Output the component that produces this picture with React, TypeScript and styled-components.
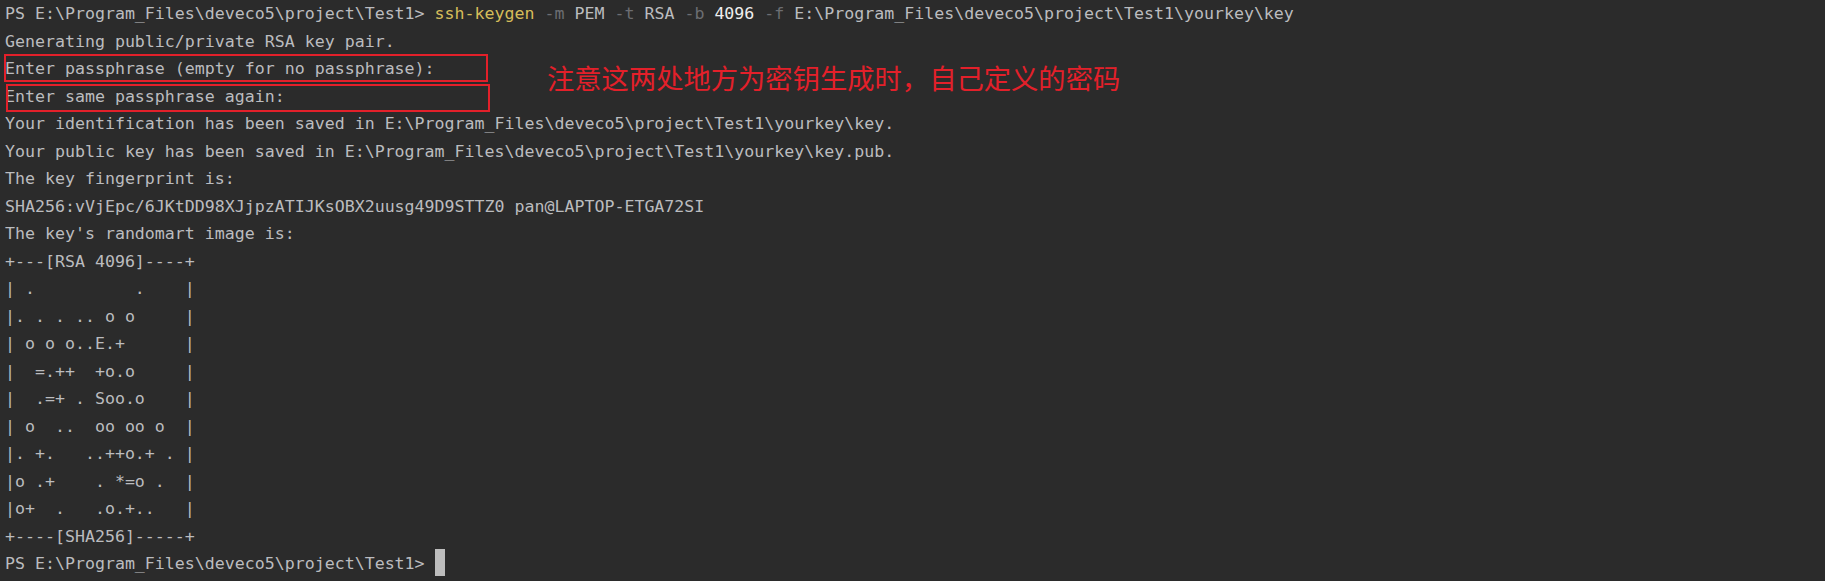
import React from "react";
import styled, { createGlobalStyle } from "styled-components";

const Global = createGlobalStyle`
  html, body { margin: 0; padding: 0; background: #2b2b2b; }
  body { width: 1825px; height: 581px; overflow: hidden; }
`;

const Terminal = styled.div`
  position: relative;
  box-sizing: border-box;
  width: 1825px;
  height: 581px;
  background: #2b2b2b;
  padding: 0 0 0 5px;
  font-family: "DejaVu Sans Mono", "Liberation Mono", monospace;
  font-size: 16.6px;
  line-height: 27.5px;
  color: #bbbcbf;
  display: flex;
  flex-direction: column;
`;

const Line = styled.div`
  position: relative;
  white-space: pre;
  height: 27.5px;
`;

const Tok = styled.span<{ $kind?: "cmd" | "flag" | "num" }>`
  color: ${(p) =>
    p.$kind === "cmd" ? "#d6bd5a" : p.$kind === "flag" ? "#6c6e72" : p.$kind === "num" ? "#eeeeee" : "inherit"};
`;

const Mark = styled.span<{ $dx: number; $dy: number }>`
  position: absolute;
  left: ${(p) => p.$dx}px;
  top: ${(p) => p.$dy}px;
  width: 480px;
  height: 24px;
  border: 2px solid #e3202a;
  pointer-events: none;
`;

const Note = styled.div`
  position: absolute;
  left: 547px;
  top: 58px;
  font-family: "Noto Sans CJK SC", "Noto Sans", sans-serif;
  font-size: 27.3px;
  line-height: 38px;
  color: #e3202a;
  white-space: nowrap;
`;

const Cursor = styled.span`
  display: inline-block;
  width: 10px;
  height: 27px;
  background: #bdbdbd;
  vertical-align: middle;
  margin-top: -4px;
`;

const prompt = "PS E:\\Program_Files\\deveco5\\project\\Test1> ";

const lines = [
  "Generating public/private RSA key pair.",
  "Enter passphrase (empty for no passphrase):",
  "Enter same passphrase again:",
  "Your identification has been saved in E:\\Program_Files\\deveco5\\project\\Test1\\yourkey\\key.",
  "Your public key has been saved in E:\\Program_Files\\deveco5\\project\\Test1\\yourkey\\key.pub.",
  "The key fingerprint is:",
  "SHA256:vVjEpc/6JKtDD98XJjpzATIJKsOBX2uusg49D9STTZ0 pan@LAPTOP-ETGA72SI",
  "The key's randomart image is:",
  "+---[RSA 4096]----+",
  "| .          .    |",
  "|. . . .. o o     |",
  "| o o o..E.+      |",
  "|  =.++  +o.o     |",
  "|  .=+ . Soo.o    |",
  "| o  ..  oo oo o  |",
  "|. +.   ..++o.+ . |",
  "|o .+    . *=o .  |",
  "|o+  .   .o.+..   |",
  "+----[SHA256]-----+",
];

export default function App() {
  return (
    <>
      <Global />
      <Terminal>
        <Line>
          {prompt}
          <Tok $kind="cmd">ssh-keygen</Tok> <Tok $kind="flag">-m</Tok> PEM <Tok $kind="flag">-t</Tok> RSA{" "}
          <Tok $kind="flag">-b</Tok> <Tok $kind="num">4096</Tok> <Tok $kind="flag">-f</Tok>{" "}
          E:\Program_Files\deveco5\project\Test1\yourkey\key
        </Line>
        {lines.map((l, i) => (
          <Line key={i}>
            {l}
            {i === 1 && <Mark $dx={-1} $dy={-1} />}
            {i === 2 && <Mark $dx={1} $dy={1.5} />}
          </Line>
        ))}
        <Line>
          {prompt}
          <Cursor />
        </Line>
        <Note>注意这两处地方为密钥生成时，自己定义的密码</Note>
      </Terminal>
    </>
  );
}
